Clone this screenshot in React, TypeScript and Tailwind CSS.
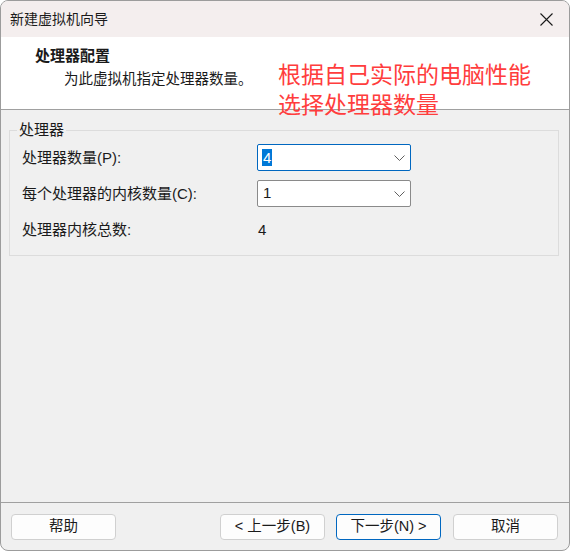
import React from "react";

const font = { fontFamily: '"Liberation Sans", "Noto Sans CJK SC", sans-serif' };

function Chevron() {
  return (
    <svg width="11" height="6" viewBox="0 0 11 6" className="shrink-0">
      <path d="M0.5 0.5 L5.5 5.5 L10.5 0.5" fill="none" stroke="#606060" strokeWidth="1" />
    </svg>
  );
}

function Btn({ children, primary }: { children: React.ReactNode; primary?: boolean }) {
  return (
    <button
      className={
        "h-[26px] w-[105px] rounded-[4px] bg-[#fdfdfd] text-[14.5px] text-[#1a1a1a] flex items-center justify-center border " +
        (primary ? "border-[#0067c0]" : "border-[#d0d0d0]")
      }
    >
      {children}
    </button>
  );
}

export default function App() {
  return (
    <div
      className="relative w-[570px] h-[551px] rounded-[8px] border border-[#9c9c9c] overflow-hidden flex flex-col bg-[#f0f0f0] text-[#1a1a1a]"
      style={font}
    >
      {/* title bar */}
      <div className="h-[36px] bg-[#f4eeee] flex items-center justify-between pl-[9px] pr-[16px] shrink-0">
        <span className="text-[14px] mt-[1px]">新建虚拟机向导</span>
        <svg width="13" height="13" viewBox="0 0 13 13">
          <path d="M0.5 0.5 L12.5 12.5 M12.5 0.5 L0.5 12.5" stroke="#1a1a1a" strokeWidth="1.1" />
        </svg>
      </div>

      {/* header */}
      <div className="h-[73px] bg-white border-b border-[#a0a0a0] shrink-0 pt-[9px] pl-[34px]">
        <div className="text-[15px] font-bold leading-[20px]">处理器配置</div>
        <div className="text-[14.5px] leading-[20px] mt-[3px] pl-[29px]">为此虚拟机指定处理器数量。</div>
      </div>

      {/* body */}
      <div className="flex-1 pt-[12px] px-[8px]">
        <fieldset className="border border-[#dcdcdc] w-[550px] h-[134px] p-0">
          <legend className="ml-[7px] px-[2px] text-[15px] leading-[16px]">处理器</legend>
          <div className="flex flex-col mt-[6px] pl-[12px]">
            <div className="flex items-center h-[27px]">
              <span className="w-[235px] text-[15px] mt-[1px]">处理器数量(P):</span>
              <div className="w-[154px] h-[27px] bg-white border border-[#0067c0] rounded-[2px] flex items-center justify-between pl-[4px] pr-[5px]">
                <span className="bg-[#0078d7] text-white text-[15px] leading-[17px] px-[1px]">4</span>
                <Chevron />
              </div>
            </div>
            <div className="flex items-center h-[27px] mt-[9px]">
              <span className="w-[235px] text-[15px] mt-[1px]">每个处理器的内核数量(C):</span>
              <div className="w-[154px] h-[27px] bg-white border border-[#8a8a8a] rounded-[2px] flex items-center justify-between pl-[5px] pr-[5px]">
                <span className="text-[15px]">1</span>
                <Chevron />
              </div>
            </div>
            <div className="flex items-center h-[24px] mt-[11px]">
              <span className="w-[236px] text-[15px]">处理器内核总数:</span>
              <span className="text-[15px]">4</span>
            </div>
          </div>
        </fieldset>
      </div>

      {/* footer */}
      <div className="h-[48px] border-t border-[#a0a0a0] shrink-0 flex items-start pt-[11px] pl-[10px] pr-[11px]">
        <Btn>帮助</Btn>
        <div className="flex-1" />
        <div className="flex gap-[11px]">
          <Btn>&lt; 上一步(B)</Btn>
          <Btn primary>下一步(N) &gt;</Btn>
          <div className="ml-[1px]">
            <Btn>取消</Btn>
          </div>
        </div>
      </div>

      {/* red annotation overlay */}
      <div className="absolute left-[277px] top-[59px] text-[23px] leading-[30px] text-[#ff3d3d] pointer-events-none">
        <div>根据自己实际的电脑性能</div>
        <div>选择处理器数量</div>
      </div>
    </div>
  );
}
